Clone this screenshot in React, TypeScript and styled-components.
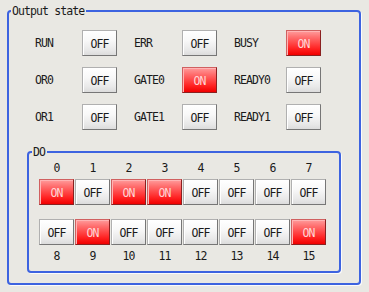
import React from 'react';
import styled, { createGlobalStyle } from 'styled-components';

type Signal = {
  name: string;
  on: boolean;
};

const signalRows: Signal[][] = [
  [
    { name: 'RUN', on: false },
    { name: 'ERR', on: false },
    { name: 'BUSY', on: true },
  ],
  [
    { name: 'OR0', on: false },
    { name: 'GATE0', on: true },
    { name: 'READY0', on: false },
  ],
  [
    { name: 'OR1', on: false },
    { name: 'GATE1', on: false },
    { name: 'READY1', on: false },
  ],
];

const labelWidths = [47, 48, 52];

const doBits = [true, false, true, true, false, false, false, false, false, true, false, false, false, false, false, true];

const App: React.FC = () => {
  const upper = doBits.slice(0, 8);
  const lower = doBits.slice(8);

  return (
    <>
      <GlobalStyle />
      <Page>
        <Frame>
          <Legend>Output state</Legend>
          <FrameBody>
            <SignalGrid>
              {signalRows.map((row, i) => (
                <SignalRow key={i}>
                  {row.map((s, j) => (
                    <Pair key={s.name}>
                      <SignalLabel $width={labelWidths[j]}>{s.name}</SignalLabel>
                      <StateButton $on={s.on}>{s.on ? 'ON' : 'OFF'}</StateButton>
                    </Pair>
                  ))}
                </SignalRow>
              ))}
            </SignalGrid>

            <DoFrame>
              <DoLegend>DO</DoLegend>
              <BitRow>
                {upper.map((_, i) => (
                  <BitNumber key={i}>{i}</BitNumber>
                ))}
              </BitRow>
              <BitRow $top={5}>
                {upper.map((on, i) => (
                  <StateButton key={i} $on={on}>
                    {on ? 'ON' : 'OFF'}
                  </StateButton>
                ))}
              </BitRow>
              <BitRow $top={14}>
                {lower.map((on, i) => (
                  <StateButton key={i} $on={on}>
                    {on ? 'ON' : 'OFF'}
                  </StateButton>
                ))}
              </BitRow>
              <BitRow $top={5}>
                {lower.map((_, i) => (
                  <BitNumber key={i}>{i + 8}</BitNumber>
                ))}
              </BitRow>
            </DoFrame>
          </FrameBody>
        </Frame>
      </Page>
    </>
  );
};

export default App;

const GlobalStyle = createGlobalStyle`
  html, body {
    margin: 0;
    padding: 0;
    background: #e9e8e3;
  }
  body {
    font-family: 'DejaVu Sans Mono', 'Liberation Mono', monospace;
    font-size: 11.5px;
    letter-spacing: -0.9px;
    color: #1a1a1a;
  }
`;

const Page = styled.div`
  width: 369px;
  height: 292px;
  padding: 5px 0 0 7px;
  box-sizing: border-box;
`;

const Frame = styled.fieldset`
  width: 354px;
  box-sizing: border-box;
  margin: 0;
  padding: 0 2px;
  border: 2px solid #3d63e0;
  border-radius: 4px;
  box-shadow: 1px 1px 0 #fbfbfb;
  min-width: 0;
`;

const Legend = styled.legend`
  padding: 0 2px 0 1px;
  line-height: 12px;
  height: 12px;
`;

const FrameBody = styled.div`
  padding: 13px 16px 10px;
`;

const SignalGrid = styled.div`
  display: flex;
  flex-direction: column;
  gap: 11px;
  padding-left: 8px;
`;

const SignalRow = styled.div`
  display: flex;
  gap: 17px;
`;

const Pair = styled.div`
  display: flex;
  align-items: center;
`;

const SignalLabel = styled.span<{ $width: number }>`
  width: ${(p) => p.$width}px;
  line-height: 12px;
`;

const StateButton = styled.button<{ $on: boolean }>`
  width: 35px;
  height: 26px;
  padding: 1px 0 0;
  margin: 0;
  box-sizing: border-box;
  font: inherit;
  letter-spacing: -0.9px;
  border: 1px solid;
  border-color: ${(p) => (p.$on ? '#d06060 #8a2020 #8a2020 #d06060' : '#b0b0b0 #767676 #767676 #b0b0b0')};
  color: ${(p) => (p.$on ? '#ffd6d6' : '#1a1a1a')};
  background: ${(p) =>
    p.$on
      ? 'linear-gradient(#ff9c9c 0%, #ff7070 25%, #ff4848 50%, #ff2020 75%, #f00000 100%)'
      : 'linear-gradient(#ffffff 0%, #f8f8f8 40%, #e8e8e8 80%, #dcdcdc 100%)'};
  box-shadow: inset 1px 1px 0 ${(p) => (p.$on ? '#ffb4b4' : '#fff')};
  cursor: pointer;
`;

const DoFrame = styled.fieldset`
  margin: 16px 0 0;
  padding: 4px 11px 9px 3px;
  border: 2px solid #3d63e0;
  border-radius: 4px;
  box-shadow: 1px 1px 0 #fbfbfb;
  min-width: 0;
`;

const DoLegend = styled.legend`
  padding: 0 2px 0 1px;
  line-height: 12px;
  height: 12px;
`;

const BitRow = styled.div<{ $top?: number }>`
  display: flex;
  gap: 1px;
  margin-top: ${(p) => p.$top ?? 0}px;
  padding-left: 7px;
`;

const BitNumber = styled.span`
  width: 35px;
  text-align: center;
  line-height: 12px;
`;
